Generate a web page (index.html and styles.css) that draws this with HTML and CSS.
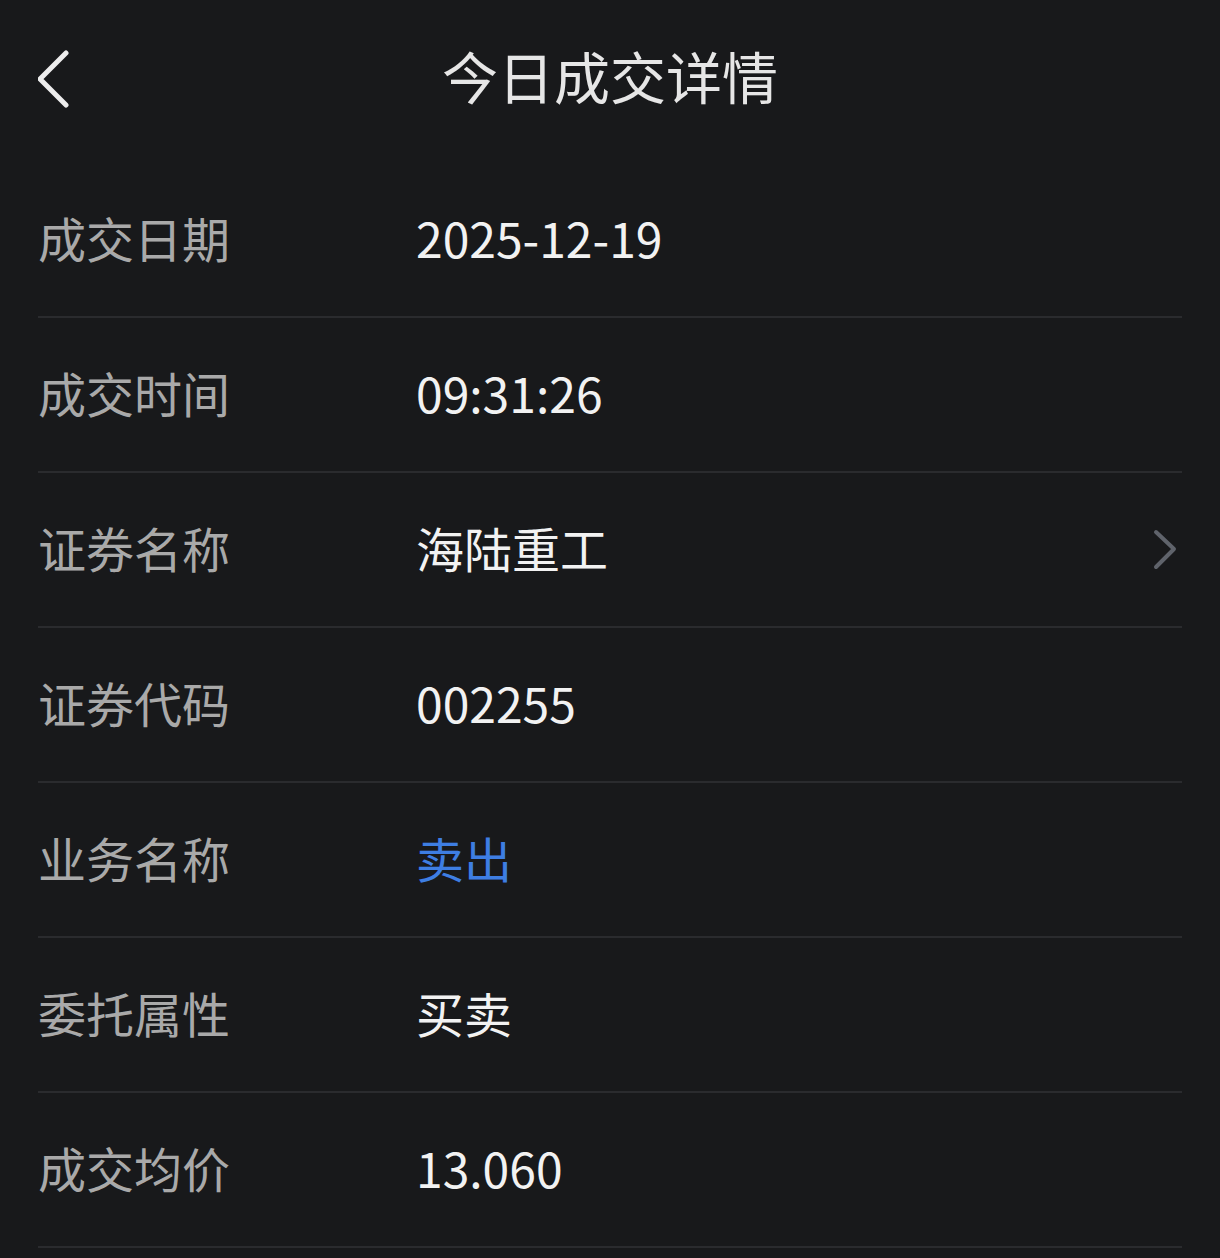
FILE: index.html
```html
<!DOCTYPE html>
<html lang="zh-CN">
<head>
    <meta charset="UTF-8">
    <meta name="viewport" content="width=device-width, initial-scale=1.0">
    <title>今日成交详情</title>
    <link rel="stylesheet" href="styles.css">
</head>
<body>
    <header class="nav">
        <svg class="back" width="40" height="64" viewBox="0 0 40 64">
            <polyline points="28,5 2,31 28,57" fill="none" stroke="#ededed" stroke-width="5" stroke-linecap="round" stroke-linejoin="round"/>
        </svg>
        <h1 class="title">今日成交详情</h1>
    </header>

    <ul class="detail">
        <li class="row">
            <span class="label">成交日期</span>
            <span class="value">2025-12-19</span>
        </li>
        <li class="row">
            <span class="label">成交时间</span>
            <span class="value">09:31:26</span>
        </li>
        <li class="row">
            <span class="label">证券名称</span>
            <span class="value">海陆重工</span>
            <svg class="more" width="28" height="44" viewBox="0 0 28 44">
                <polyline points="6,4 24,21 6,39" fill="none" stroke="#5f636b" stroke-width="4" stroke-linecap="round" stroke-linejoin="round"/>
            </svg>
        </li>
        <li class="row">
            <span class="label">证券代码</span>
            <span class="value">002255</span>
        </li>
        <li class="row">
            <span class="label">业务名称</span>
            <span class="value sell">卖出</span>
        </li>
        <li class="row">
            <span class="label">委托属性</span>
            <span class="value">买卖</span>
        </li>
        <li class="row">
            <span class="label">成交均价</span>
            <span class="value">13.060</span>
        </li>
    </ul>
</body>
</html>
```

FILE: styles.css
```css
body {
    margin: 0;
    background: #18191b;
    font-family: "Noto Sans CJK SC", "Noto Sans", sans-serif;
    color: #eeeeee;
}
.nav {
    position: relative;
    height: 163px;
    display: flex;
    align-items: center;
    justify-content: center;
}
.back {
    position: absolute;
    left: 38px;
    top: 48px;
}
.title {
    margin: 0 0 14px 0;
    font-size: 56px;
    font-weight: 400;
    color: #e6e6e6;
}
.detail {
    list-style: none;
    margin: 0;
    padding: 0 38px;
}
.row {
    height: 147px;
    padding-bottom: 6px;
    display: flex;
    align-items: center;
    border-bottom: 2px solid #2a2b2e;
}
.label {
    width: 378px;
    font-size: 48px;
    color: #a9a9a9;
}
.value {
    flex: 1;
    font-size: 48px;
    color: #f2f2f2;
}
.sell {
    color: #3e7ee3;
}
.more {
    margin: 6px 4px 0 0;
}
```
